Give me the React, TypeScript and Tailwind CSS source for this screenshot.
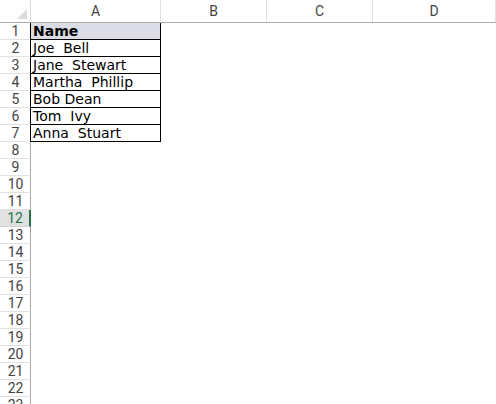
import React from "react";

const names = ["Joe  Bell", "Jane  Stewart", "Martha  Phillip", "Bob Dean", "Tom  Ivy", "Anna  Stuart"];
const rowCount = 23;

export default function App() {
  const rows = Array.from({ length: rowCount }, (_, i) => i + 1);
  return (
    <div className="w-[496px] h-[404px] overflow-hidden bg-white select-none">
      {/* Column header */}
      <div className="flex h-[23px] border-b border-[#ababab]">
        <div className="relative w-[31px] shrink-0 border-r border-[#dadada]">
          <svg className="absolute right-[3px] bottom-[3px]" width="10" height="10" viewBox="0 0 10 10">
            <polygon points="10,0 10,10 0,10" fill="#dcdcdc" />
          </svg>
        </div>
        {[
          ["A", "w-[130px]"],
          ["B", "w-[106px]"],
          ["C", "w-[106px]"],
          ["D", "w-[123px]"],
        ].map(([l, w]) => (
          <div
            key={l}
            className={`${w} shrink-0 flex items-center justify-center border-r border-[#e1e1e1] text-[14px] leading-[16px] text-[#444]`}
            style={{ fontFamily: 'Roboto, "Noto Sans", sans-serif' }}
          >
            {l}
          </div>
        ))}
      </div>
      {rows.map((r) => {
        const sel = r === 12;
        const inTable = r <= 7;
        return (
          <div key={r} className="flex h-[17px]">
            <div
              className={`w-[31px] shrink-0 flex items-center justify-center text-[14px] border-b ${
                sel
                  ? "bg-[#e1e1e1] text-[#217346] border-r-2 border-r-[#217346] border-b-[#d4d4d4]"
                  : "text-[#444] border-r border-r-[#ababab] border-b-[#e1e1e1]"
              }`}
              style={{ fontFamily: 'Roboto, "Noto Sans", sans-serif' }}
            >
              <span className="leading-[16px] pl-[1px]">{r}</span>
            </div>
            {inTable ? (
              <div
                className={`w-[131px] shrink-0 -ml-px border-l border-r border-b border-black pl-[2px] text-[14px] leading-[16px] text-black whitespace-pre ${
                  r === 1 ? "bg-[#dcdce6] font-bold" : ""
                }`}
                style={{ fontFamily: '"DejaVu Sans", Verdana, sans-serif' }}
              >
                {r === 1 ? "Name" : names[r - 2]}
              </div>
            ) : null}
          </div>
        );
      })}
    </div>
  );
}
